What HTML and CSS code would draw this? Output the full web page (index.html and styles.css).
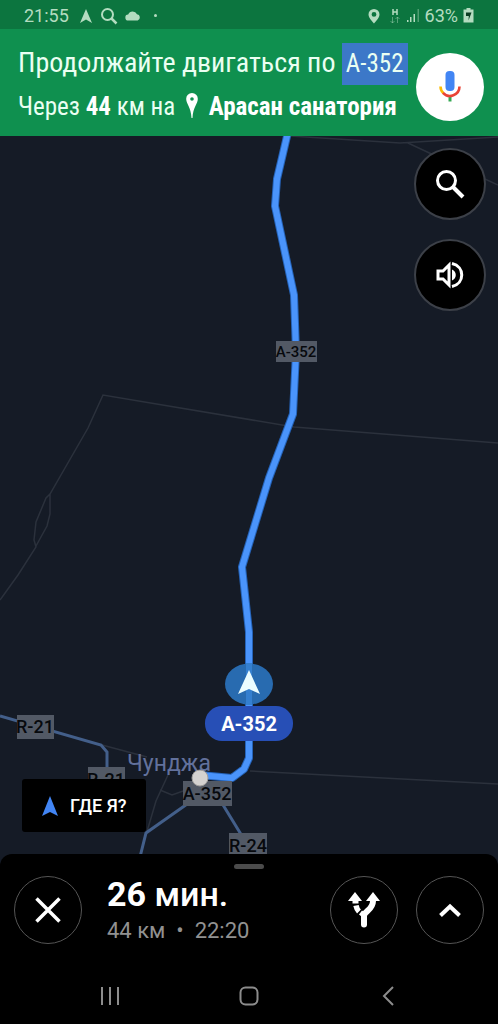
FILE: index.html
```html
<!DOCTYPE html>
<html lang="ru">
<head>
<meta charset="utf-8">
<meta name="viewport" content="width=device-width, initial-scale=1">
<title>Навигация</title>
<link rel="stylesheet" href="styles.css">
</head>
<body>
<div class="app">
  <div class="status">
    <div class="status-group">
      <span class="clock">21:55</span>
      <svg class="status-icon" width="14" height="16" viewBox="0 0 14 16"><path d="M7 1 13 15 7 11.500 1 15Z" fill="currentColor"/></svg>
      <svg class="status-icon" width="18" height="18" viewBox="0 0 18 18" fill="none" stroke="currentColor" stroke-width="2"><circle cx="7.500" cy="7.500" r="5.500"/><path d="m11.500 11.500 5 5" stroke-width="2.500"/></svg>
      <svg class="status-icon" width="16" height="12" viewBox="0 0 16 12"><path d="M3.500 10.500a3 3 0 0 1-.3-6A4.800 4.800 0 0 1 12 4.300a3.200 3.200 0 0 1 .7 6.200Z" fill="currentColor"/></svg>
      <span class="dot"></span>
    </div>
    <div class="status-group status-right">
      <svg width="12" height="16" viewBox="0 0 12 16"><path fill="currentColor" fill-rule="evenodd" d="M6 1a5.500 5.500 0 0 1 5.500 5.500C11.500 10 6 15.500 6 15.500S.5 10 .5 6.500A5.500 5.500 0 0 1 6 1Zm0 3a2.400 2.400 0 1 0 0 4.800A2.400 2.400 0 0 0 6 4Z"/></svg>
      <svg width="12" height="18" viewBox="0 0 12 18" fill="none" stroke="currentColor"><path d="M4 2v6M8 2v6M4 5h4" stroke-width="1.500"/><path d="M3.500 10v6m-2-2 2 2 2-2M8.500 16v-6m-2 2 2-2 2 2" opacity=".45"/></svg>
      <svg width="14" height="15" viewBox="0 0 14 15" fill="currentColor"><path d="M1 12h1.500v2H1zM4 9h1.500v5H4zM7.500 6H9v8H7.500z"/><path d="M11.500 1H13v13h-1.500z" opacity=".4"/></svg>
      <span class="charge">63%</span>
      <svg width="11" height="15" viewBox="0 0 11 15"><path fill="currentColor" d="M3.500 0h4v1.500H10.500V14.500H.5V1.500h3Z"/><path d="M3 4.500h5.500L5.500 12.500 5.800 8H3Z" fill="#0b3d22"/></svg>
    </div>
  </div>

  <header class="guide">
    <div class="guide-text">
      <p class="guide-main">Продолжайте двигаться по <span class="road-tag">А-352</span></p>
      <p class="guide-next">Через <b>44</b> км на
        <svg class="guide-pin" width="12" height="26" viewBox="0 0 12 26"><path fill="currentColor" fill-rule="evenodd" d="M6 0a5.800 5.800 0 0 1 5.800 6C11.800 11 7 14 6.500 25h-1C5 14 .2 11 .2 6A5.800 5.800 0 0 1 6 0Zm0 4.200a1.800 1.800 0 1 0 0 3.600 1.800 1.800 0 0 0 0-3.600Z"/></svg>
        <b>Арасан санатория</b></p>
    </div>
    <button class="mic" type="button" aria-label="Голосовой ввод">
      <svg width="26" height="34" viewBox="0 0 26 34" fill="none"><rect x="8.500" y="1" width="9" height="20" rx="4" fill="#4285f4"/><path d="M13 26v5.500" stroke="#34a853" stroke-width="3"/><path d="M3.500 16.500a9.500 9.500 0 0 0 3 6.800" stroke="#fbbc05" stroke-width="2.600"/><path d="M6 22.800A9.500 9.500 0 0 0 22.500 16.500" stroke="#ea4335" stroke-width="2.600"/></svg>
    </button>
  </header>

  <main class="map">
    <svg class="map-canvas" viewBox="0 136 498 734" preserveAspectRatio="xMidYMin slice" role="img" aria-label="Карта маршрута">
      <g class="minor">
        <path d="M290 136 400 143 498 137M408 143l90 42"/>
        <path d="M498 443 294 427 103 395 88 428 50 494 46 498 36 522 34 540 36 547 18 575 0 600M50 494v20l-3 12-11 20"/>
        <path d="M102 745l45 12M168 775l-12 26-10 34M160 790l12 5 14-5M250 771l248 13"/>
      </g>
      <path class="road" d="M0 716 101 745l6 7v28M190 802l-44 31-6 24M220 800l22 36"/>
      <g class="shield"><rect x="17" y="715" width="37" height="24"/><text x="35" y="733">R-21</text></g>
      <g class="shield"><rect x="88" y="767" width="37" height="24"/><text x="106" y="786">R-21</text></g>
      <text class="town" x="169" y="771">Чунджа</text>
      <path class="route-edge" d="M288 132 277 179 275 206 294 295 296 352 293 414 269 478 242 567 249 632V758l-5 11-12 9-32-3"/>
      <path class="route" d="M288 132 277 179 275 206 294 295 296 352 293 414 269 478 242 567 249 632V758l-5 11-12 9-32-3"/>
      <g class="shield"><rect x="183" y="781" width="49" height="25"/><text x="207" y="800">А-352</text></g>
      <g class="shield"><rect x="229" y="833" width="38" height="24"/><text x="248" y="852">R-24</text></g>
      <g class="shield shield-small"><rect x="276" y="341" width="41" height="21"/><text x="296" y="357">А-352</text></g>
      <circle cx="200" cy="778" r="8" fill="#d4d2d0" stroke="#a09e9c"/>
      <ellipse cx="249" cy="684" rx="24" ry="20.500" fill="#286bb0"/>
      <path d="M249 663v42" stroke="#347fcf" stroke-width="6"/>
      <path d="m249 670 11 24-11-5-11 5Z" fill="#eafcff"/>
      <rect x="205" y="706" width="88" height="35" rx="17" fill="#274fb6"/>
      <text class="current-road" x="249" y="731">А-352</text>
    </svg>
    <div class="map-tools">
      <button class="tool" type="button" aria-label="Поиск">
        <svg width="30" height="30" viewBox="0 0 30 30" fill="none" stroke="#fff"><circle cx="11.500" cy="11.500" r="9" stroke-width="3"/><path d="m18 18 10 10" stroke-width="4"/></svg>
      </button>
      <button class="tool" type="button" aria-label="Звук">
        <svg width="30" height="28" viewBox="0 0 30 28" fill="none" stroke="#fff"><path d="M3 10h5l6-6v20l-6-6H3Z" stroke-width="3"/><path d="M17 8.500c5 2 5 9 0 11Z" fill="#fff" stroke="none"/><path d="M17 2.500c13 3 13 20 0 23" stroke-width="3"/></svg>
      </button>
    </div>
    <button class="locate" type="button">
      <svg width="16" height="20" viewBox="0 0 16 20"><path d="m8 0 8 20-8-4-8 4Z" fill="#4285f4"/></svg>
      ГДЕ Я?
    </button>
  </main>

  <section class="sheet">
    <div class="grip"></div>
    <div class="trip">
      <button class="round" type="button" aria-label="Закрыть">
        <svg width="26" height="26" viewBox="0 0 26 26"><path d="m1.500 1.500 23 23m0-23-23 23" stroke="#fff" stroke-width="3.500"/></svg>
      </button>
      <div class="trip-text">
        <p class="eta"><b>26</b> мин.</p>
        <p class="trip-info">44 км&nbsp; •&nbsp; 22:20</p>
      </div>
      <button class="round" type="button" aria-label="Маршруты">
        <svg width="32" height="36" viewBox="0 0 32 36" fill="none" stroke="#fff"><path d="M16 32v-8c0-5 9-6 9-15" stroke-width="6"/><path d="M16 31v1.500" stroke-width="6" stroke-linecap="round"/><path d="M7.500 8v3.500" stroke-width="6"/><path d="M8 13.500c.5 2.500 1.500 4.500 3 6" stroke-width="5.500"/><path d="M12.500 20.500 17 24" stroke-width="5"/><path d="M0 9 7 0l7 9ZM18 9l7-9 7 9Z" fill="#fff" stroke="none"/></svg>
      </button>
      <button class="round" type="button" aria-label="Развернуть">
        <svg width="22" height="14" viewBox="0 0 22 14"><path d="m1.500 12.500 9.500-9 9.500 9" fill="none" stroke="#fff" stroke-width="4"/></svg>
      </button>
    </div>
  </section>

  <nav class="system">
    <button type="button" aria-label="Недавние"><svg width="20" height="20" viewBox="0 0 20 20"><path d="M2 1v18M10 1v18M18 1v18"/></svg></button>
    <button type="button" aria-label="Домой"><svg width="20" height="20" viewBox="0 0 20 20"><rect x="1.500" y="1.500" width="17" height="17" rx="5"/></svg></button>
    <button type="button" aria-label="Назад"><svg width="20" height="20" viewBox="0 0 20 20"><path d="m15 1-9 9 9 9"/></svg></button>
  </nav>
</div>
</body>
</html>
```
FILE: styles.css
```css
* { box-sizing: border-box; }
body { margin: 0; background: #000; font-family: Roboto, "Noto Sans", sans-serif; color: #fff; }
p { margin: 0; }
button { border: 0; padding: 0; margin: 0; color: inherit; font: inherit; cursor: pointer; }
svg { display: block; flex: none; }

.app { display: flex; flex-direction: column; min-height: 100vh; }

.status {
  display: flex; align-items: center; justify-content: space-between;
  height: 29px; padding: 2px 24px 0; background: #0c753f; color: #b4dcc0;
  font-size: 18px;
}
.status-group { display: flex; align-items: center; gap: 7px; }
.status-group .clock { margin-right: 3px; }
.status-right { gap: 5px; }
.status-right svg:first-child { margin-right: 4px; }
.dot { width: 3px; height: 3px; margin-left: 6px; border-radius: 50%; background: currentColor; }

.guide {
  display: flex; align-items: center; justify-content: space-between;
  min-height: 107px; padding: 2px 14px 0 18px; background: #0f904f;
  color: #eafff2; font-family: "Roboto Condensed", "Liberation Sans Narrow", Roboto, sans-serif;
}
.guide-text { white-space: nowrap; }
.guide-main { font-size: 28px; line-height: 46px; }
.guide-next { font-size: 25px; line-height: 42px; }
.guide-next b { color: #fff; }
.road-tag { display: inline-block; padding: 0 4px; font-size: 25px; line-height: 42px; background: #3c78c8; }
.guide-pin { display: inline-block; margin: 0 5px; vertical-align: -4px; color: #fff; }
.mic {
  display: grid; place-items: center; flex: none; width: 68px; height: 68px;
  margin-top: 6px; border-radius: 50%; background: #fff;
}

.map { position: relative; flex: 1; display: flex; flex-direction: column; justify-content: space-between; min-height: 480px; padding: 12px 12px 22px 22px; background: #151b26; }
.map-canvas { position: absolute; inset: 0 0 -16px; width: 100%; height: calc(100% + 16px); background: #151b26; }
.minor { fill: none; stroke: #2b313c; stroke-width: 1.500; }
.road { fill: none; stroke: #435f8a; stroke-width: 3; }
.route { fill: none; stroke: #4a94fb; stroke-width: 6; stroke-linejoin: round; }
.route-edge { fill: none; stroke: #2563b8; stroke-width: 8; stroke-linejoin: round; }
.shield rect { fill: #525965; }
.shield text { fill: #07090d; font-size: 18px; font-weight: 500; text-anchor: middle; }
.shield-small text { font-size: 15px; }
.town { fill: #62719c; font-size: 23px; text-anchor: middle; }
.current-road { fill: #fff; font-size: 20px; font-weight: 700; text-anchor: middle; }

.map-tools { position: relative; align-self: flex-end; display: flex; flex-direction: column; gap: 19px; }
.tool {
  display: grid; place-items: center; width: 72px; height: 72px;
  border: 2px solid #3c4048; border-radius: 50%; background: #000;
}
.locate {
  position: relative; align-self: flex-start; display: flex; align-items: center; gap: 12px;
  height: 53px; padding: 0 20px; border-radius: 3px; background: #000;
  font-size: 18px; font-weight: 500;
}

.sheet { position: relative; padding: 10px 14px 20px; border-radius: 12px 12px 0 0; background: #000; }
.grip { width: 30px; height: 5px; margin: 0 auto; border-radius: 3px; background: #4b4b4b; }
.trip { display: flex; align-items: center; gap: 18px; padding-top: 4px; }
.round {
  display: grid; place-items: center; flex: none; width: 68px; height: 68px;
  border: 1px solid #555; border-radius: 50%; background: #000;
}
.trip-text { flex: 1; padding-left: 7px; white-space: nowrap; }
.eta { font-size: 34px; line-height: 42px; font-weight: 500; }
.trip-info { font-size: 22px; line-height: 32px; color: #919191; }

.system { display: flex; justify-content: space-around; height: 57px; padding: 0 40px; align-items: center; background: #000; }
.system button { background: none; padding: 12px; }
.system svg { fill: none; stroke: #8c8c8c; stroke-width: 2; }
```
